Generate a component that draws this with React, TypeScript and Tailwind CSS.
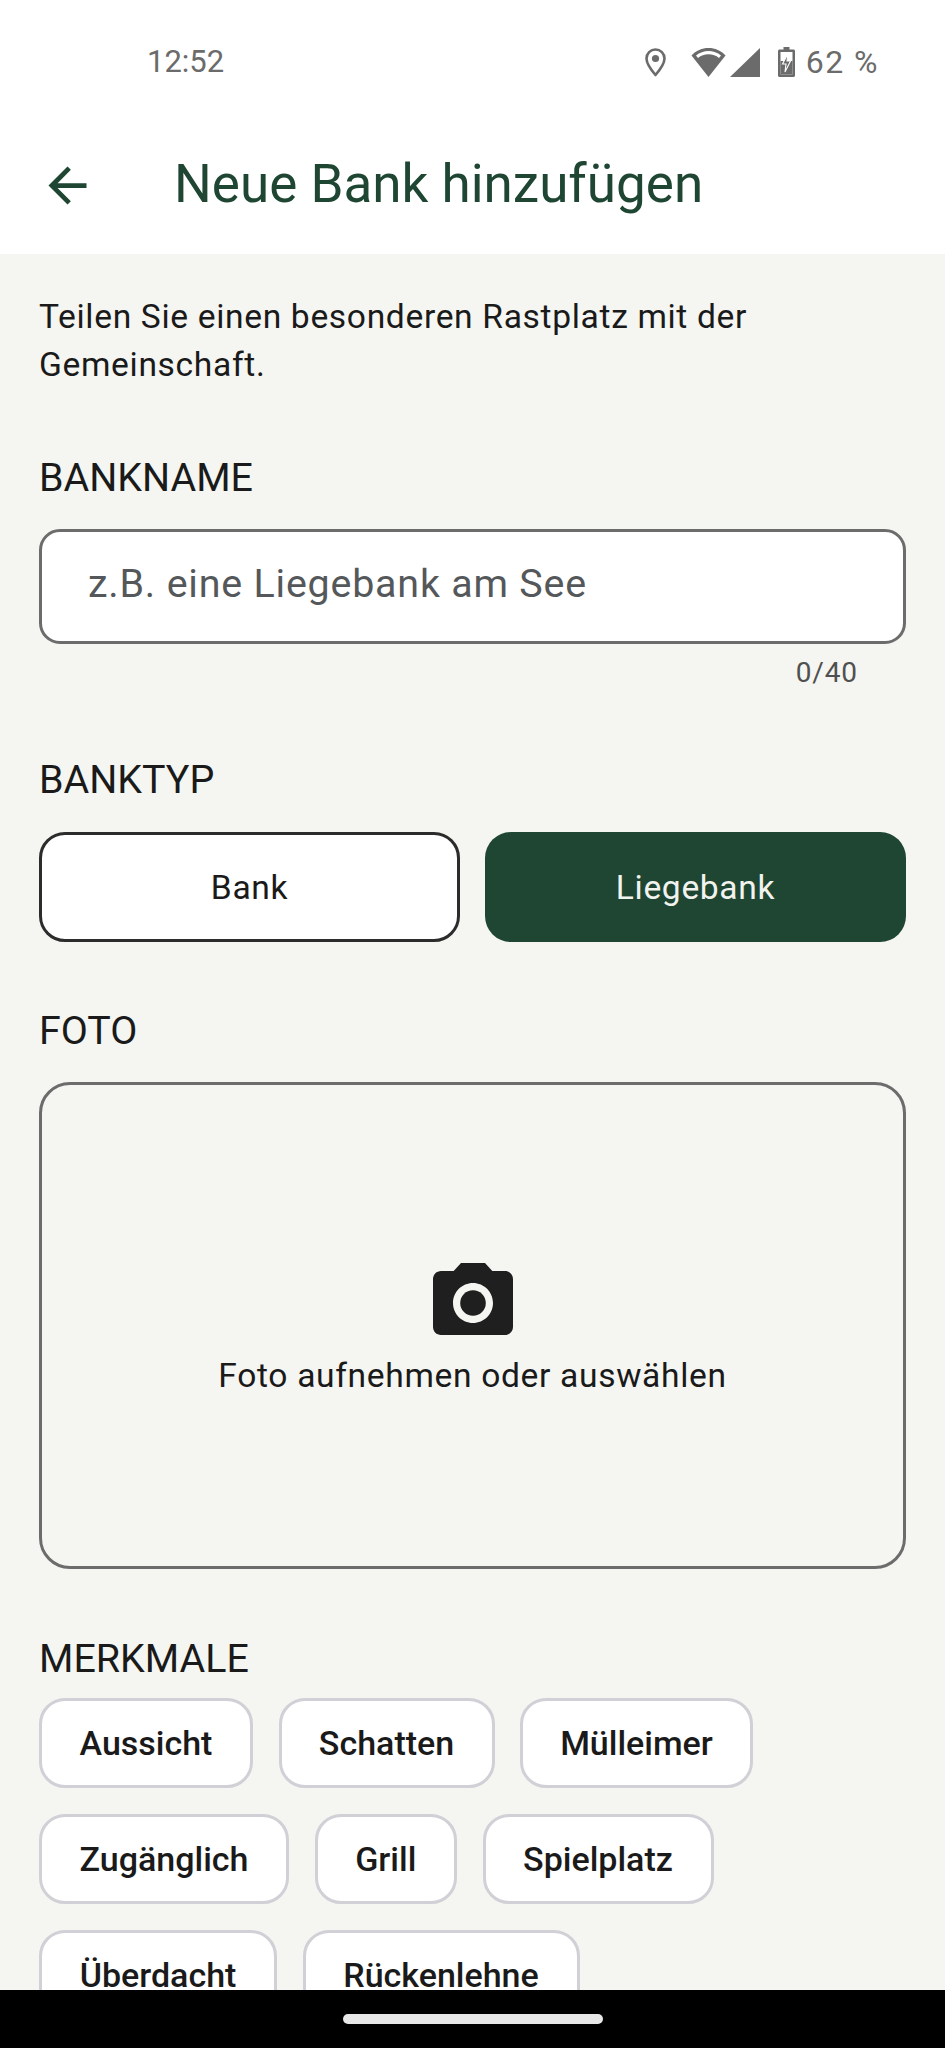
const Chip = ({ children, w }: { children: string; w: string }) => (
  <div className={`${w} h-[90px] flex items-center justify-center bg-white border-[3px] border-[#d0d0d6] rounded-[26px] text-[34px] font-medium text-[#1a1a1a] shrink-0`}>
    {children}
  </div>
);

const Label = ({ children, className }: { children: string; className: string }) => (
  <div className={`text-[39.4px] leading-[44px] text-[#1a1a1a] ${className}`}>{children}</div>
);

export default function App() {
  return (
    <div className="w-[945px] h-[2048px] flex flex-col overflow-hidden bg-[#f5f6f2] font-['Roboto',sans-serif]">
      <div className="h-[254px] shrink-0 bg-white flex flex-col">
        <div className="h-[147px] flex items-start justify-between pl-[147px] pr-[66px] pt-[42px] text-[#6b6b6b]">
          <span className="text-[31px] leading-[40px]">12:52</span>
          <div className="flex items-center h-[40px] text-[32px]">
            <svg width="21" height="29" viewBox="0 0 21 29" className="mr-[25px]">
              <path d="M10.5 1.5C5.5 1.5 1.5 5.5 1.5 10.5C1.5 16.5 10.5 27 10.5 27S19.5 16.5 19.5 10.5C19.5 5.5 15.5 1.5 10.5 1.5Z" fill="none" stroke="#6b6b6b" strokeWidth="2.6" strokeLinejoin="round" />
              <circle cx="10.5" cy="10.5" r="3.6" fill="#6b6b6b" />
            </svg>
            <svg width="35" height="30" viewBox="0 0 35 30" className="mr-[4px]">
              <path d="M0.5 8.5C5 3.5 11 1 17.5 1S30 3.5 34.5 8.5L17.5 30Z" fill="#6b6b6b" />
              <path d="M5 8.5C8.5 5.5 13 4 17.5 4S26.500 5.500 30 8.500L28 11C25 8.500 21.500 7.300 17.500 7.300S10 8.500 7 11Z" fill="#fff" />
            </svg>
            <svg width="30" height="29" viewBox="0 0 30 29" className="mr-[18px]">
              <path d="M30 0V29H0Z" fill="#6b6b6b" />
            </svg>
            <svg width="17" height="30" viewBox="0 0 17 30" className="mr-[11px]">
              <path d="M5.500 0H11.500V2.500H15.500C16.300 2.500 17 3.200 17 4V28.500C17 29.300 16.300 30 15.500 30H1.500C0.700 30 0 29.300 0 28.500V4C0 3.200 0.700 2.500 1.500 2.500H5.500Z" fill="#6b6b6b" />
              <path d="M2.500 5H14.500V27.500H2.500Z" fill="#fff" />
              <path d="M2.500 14H14.500V27.500H2.500Z" fill="#6b6b6b" />
              <path d="M10 6.500L4.500 17H8L7 25L12.500 14H9Z" fill="#6b6b6b" stroke="#fff" strokeWidth="1.100" />
            </svg>
            <span className="leading-[40px] tracking-[1.5px]">62 %</span>
          </div>
        </div>
        <div className="flex items-center h-[74px] pl-[38.5px] text-[#1e4633]">
          <svg width="57" height="57" viewBox="0 0 24 24" fill="#1e4633" className="shrink-0 mt-[3px]">
            <path d="M20 11H7.830l5.590-5.590L12 4l-8 8 8 8 1.410-1.410L7.830 13H20v-2z" />
          </svg>
          <span className="ml-[78.5px] text-[53px] leading-[74px]">Neue Bank hinzufügen</span>
        </div>
      </div>

      <div className="flex-1 min-h-0 overflow-hidden px-[39px] pt-[39px]">
        <div className="text-[33.6px] leading-[48px] tracking-[0.66px] text-[#1a1a1a]">
          Teilen Sie einen besonderen Rastplatz mit der
          <br />
          Gemeinschaft.
        </div>
        <Label className="mt-[67px]">BANKNAME</Label>
        <div className="mt-[29px] h-[115px] bg-white border-[3px] border-[#6c6c6c] rounded-[21px] flex items-center pl-[46px] pb-[5px] text-[39.4px] tracking-[0.8px] text-[#55585a]">
          z.B. eine Liegebank am See
        </div>
        <div className="mt-[13px] pr-[48px] text-right text-[28px] leading-[32px] tracking-[0.9px] text-[#505050]">0/40</div>

        <Label className="mt-[69px]">BANKTYP</Label>
        <div className="mt-[30px] grid grid-cols-2 gap-[25px]">
          <div className="h-[110px] bg-white border-[3px] border-[#2c2c2c] rounded-[26px] flex items-center justify-center pt-[2px] text-[33.6px] tracking-[0.66px] text-[#1a1a1a]">Bank</div>
          <div className="h-[110px] bg-[#1e4633] rounded-[26px] flex items-center justify-center pt-[2px] text-[33.6px] tracking-[0.66px] text-[#f2f2ef]">Liegebank</div>
        </div>

        <Label className="mt-[67px]">FOTO</Label>
        <div className="mt-[29px] h-[487px] border-[3px] border-[#6c6c6c] rounded-[31px] flex flex-col items-center justify-center">
          <svg width="96" height="96" viewBox="0 0 24 24" fill="#1f1f1f" className="mt-[1px]">
            <circle cx="12" cy="12" r="3.200" />
            <path d="M9 2L7.170 4H4c-1.100 0-2 .9-2 2v12c0 1.100.9 2 2 2h16c1.100 0 2-.9 2-2V6c0-1.100-.9-2-2-2h-3.170L15 2H9zm3 15c-2.760 0-5-2.240-5-5s2.240-5 5-5 5 2.240 5 5-2.240 5-5 5z" />
          </svg>
          <div className="mt-[3px] text-[33.6px] leading-[44px] tracking-[0.66px] text-[#1a1a1a]">Foto aufnehmen oder auswählen</div>
        </div>

        <Label className="mt-[68px]">MERKMALE</Label>
        <div className="mt-[17px] flex flex-col gap-[26px]">
          <div className="flex gap-[25.5px]">
            <Chip w="w-[214px]">Aussicht</Chip>
            <Chip w="w-[216px]">Schatten</Chip>
            <Chip w="w-[233px]">Mülleimer</Chip>
          </div>
          <div className="flex gap-[25.5px]">
            <Chip w="w-[250px]">Zugänglich</Chip>
            <Chip w="w-[142.5px]">Grill</Chip>
            <Chip w="w-[231px]">Spielplatz</Chip>
          </div>
          <div className="flex gap-[25.5px]">
            <Chip w="w-[238px]">Überdacht</Chip>
            <Chip w="w-[277px]">Rückenlehne</Chip>
          </div>
        </div>
      </div>

      <div className="h-[58px] shrink-0 bg-black flex justify-center pt-[24px]">
        <div className="w-[260px] h-[10px] rounded-full bg-[#e8e8e8]" />
      </div>
    </div>
  );
}
